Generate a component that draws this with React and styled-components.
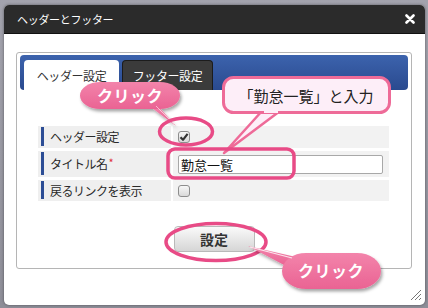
import React from "react";
import styled, { createGlobalStyle } from "styled-components";

const Global = createGlobalStyle`
  html, body { margin: 0; padding: 0; }
  body {
    background: #8f8f99;
    font-family: "Noto Sans CJK JP", "Noto Sans", sans-serif;
  }
  #root { width: 428px; height: 308px; }
`;

const Stage = styled.div`
  position: relative;
  width: 428px;
  height: 308px;
  overflow: hidden;
  padding: 5px 0 0 4px;
  box-sizing: border-box;
  background: linear-gradient(#a3a3ad, #8e8e98);
`;

const Dialog = styled.div`
  position: relative;
  width: 421px;
  height: 300px;
  background: #fff;
  border-radius: 5px;
  box-shadow: 0 0 3px rgba(0, 0, 0, 0.45);
  display: flex;
  flex-direction: column;
`;

const TitleBar = styled.div`
  height: 28px;
  flex: none;
  background: #2b2b2b;
  border-bottom: 1px solid #111;
  border-radius: 5px 5px 0 0;
  display: flex;
  align-items: center;
  justify-content: space-between;
  padding: 0 10px 0 13px;
`;

const Title = styled.span`
  color: #fff;
  font-size: 11px;
  letter-spacing: -0.3px;
`;

const Body = styled.div`
  padding: 18px 12px 0 12px;
`;

const Panel = styled.div`
  box-sizing: border-box;
  width: 396px;
  height: 217px;
  border: 1px solid #b5b5b5;
  border-radius: 3px;
  padding: 2px 3px 0 3px;
`;

const TabBar = styled.div`
  height: 35px;
  box-sizing: border-box;
  background: linear-gradient(#3c63ad, #2a4a8f);
  border-radius: 4px;
  display: flex;
  align-items: flex-end;
  gap: 3px;
  padding: 5px 0 0 4px;
`;

const Tab = styled.div`
  box-sizing: border-box;
  width: ${(p) => p.$w}px;
  height: 30px;
  border-radius: 4px 4px 0 0;
  display: flex;
  align-items: center;
  justify-content: center;
  font-size: 12px;
  letter-spacing: -0.4px;
  background: ${(p) => (p.$active ? "#fff" : "#3b3b3b")};
  color: ${(p) => (p.$active ? "#333" : "#fff")};
  border: ${(p) => (p.$active ? "none" : "1px solid #1c1c1c")};
  border-bottom: none;
`;

const Content = styled.div`
  padding: 36px 18px 0 18px;
`;

const FormGrid = styled.div`
  display: grid;
  width: 351px;
  grid-template-columns: 133px 216px;
  grid-template-rows: 22px 26px 21px;
  column-gap: 2px;
  row-gap: 3px;
`;

const Label = styled.div`
  background: #efefef;
  display: flex;
  padding: 1px 0 2px 3px;
`;

const LabelText = styled.div`
  display: flex;
  align-items: center;
  border-left: 3px solid #2c4d95;
  padding-left: 6px;
  font-size: 12px;
  letter-spacing: -0.5px;
  color: #2a2a2a;
`;

const Required = styled.span`
  color: #e0303a;
  margin-left: 1px;
  font-size: 11px;
  align-self: flex-start;
  margin-top: 2px;
`;

const Value = styled.div`
  background: #f2f2f2;
  display: flex;
  align-items: center;
  padding-left: 5px;
`;

const Check = styled.span`
  width: 12px;
  height: 12px;
  box-sizing: border-box;
  border: 1px solid #8d8d8d;
  border-radius: 3px;
  background: linear-gradient(#f7f7f7, #d9d9d9);
  display: flex;
  align-items: center;
  justify-content: center;
`;

const TextInput = styled.div`
  box-sizing: border-box;
  width: 205px;
  height: 19px;
  border: 1px solid #a8a8a8;
  border-radius: 2px;
  background: #fff;
  font-size: 13px;
  color: #111;
  display: flex;
  align-items: center;
  padding-left: 2px;
`;

const ButtonRow = styled.div`
  display: flex;
  justify-content: center;
  margin-top: 25px;
`;

const Button = styled.div`
  box-sizing: border-box;
  width: 81px;
  height: 26px;
  border: 1px solid #b9b9b9;
  border-radius: 4px;
  background: linear-gradient(#fafafa, #d6d6d6);
  display: flex;
  align-items: center;
  justify-content: center;
  font-size: 14px;
  font-weight: 700;
  color: #333;
`;

const Grip = styled.svg`
  position: absolute;
  right: 3px;
  bottom: 4px;
`;

const Overlay = styled.svg`
  position: absolute;
  left: 0;
  top: 0;
  pointer-events: none;
`;

const CalloutText = styled.span`
  position: absolute;
  left: ${(p) => p.$x}px;
  top: ${(p) => p.$y}px;
  transform: translate(-50%, -50%);
  white-space: nowrap;
  font-size: ${(p) => (p.$light ? 15 : 16)}px;
  font-weight: ${(p) => (p.$light ? 400 : 700)};
  color: ${(p) => (p.$light ? "#222" : "#fff")};
  letter-spacing: ${(p) => (p.$light ? "0" : "0.5px")};
`;

const PINK = "#ee6b98";
const RING = "#e84b86";

function CheckBox({ checked }) {
  return (
    <Check>
      {checked && (
        <svg width="10" height="10" viewBox="0 0 10 10">
          <path d="M1.5 5.2 L4 7.8 L8.6 1.8" fill="none" stroke="#333" strokeWidth="2.2" strokeLinejoin="round" />
        </svg>
      )}
    </Check>
  );
}

function Annotations() {
  return (
    <Overlay width="428" height="308" viewBox="0 0 428 308">
      <defs>
        <linearGradient id="pinkg" x1="0" y1="0" x2="0" y2="1">
          <stop offset="0" stopColor="#f384ab" />
          <stop offset="1" stopColor="#ea6393" />
        </linearGradient>
        <filter id="sh" x="-20%" y="-20%" width="150%" height="160%">
          <feDropShadow dx="1.5" dy="2.5" stdDeviation="1.5" floodColor="#000" floodOpacity="0.35" />
        </filter>
      </defs>

      {/* bubble 1 */}
      <g filter="url(#sh)">
        <path d="M148 105 L176 126 L158 106 Z" fill="url(#pinkg)" />
        <rect x="80" y="82" width="100" height="27" rx="20" ry="13.5" fill="url(#pinkg)" />
      </g>
      <path d="M156 106 L174 124" stroke="#fff" strokeWidth="0.8" opacity="0.7" />

      {/* ring around checkbox */}
      <ellipse cx="186" cy="131.5" rx="26.5" ry="13.5" fill="none" stroke={RING} strokeWidth="3.5" />

      {/* bubble 2 */}
      <path d="M262 111 L224 153 L280 111 Z" fill="#fdeef8" stroke={PINK} strokeWidth="2.5" strokeLinejoin="round" />
      <rect x="223.5" y="77.5" width="166" height="35" rx="10" fill="#fdeef8" stroke={PINK} strokeWidth="3" />
      <path d="M264 111.5 L278 111.5" stroke="#fdeef8" strokeWidth="3" />

      {/* rounded rect around input */}
      <rect x="168" y="149" width="126" height="29" rx="7" fill="none" stroke={RING} strokeWidth="3.5" />

      {/* ring around button */}
      <ellipse cx="216" cy="242" rx="50" ry="18.5" fill="none" stroke={RING} strokeWidth="3.5" />

      {/* bubble 3 */}
      <g filter="url(#sh)">
        <path d="M248 246 L296 257 L286 266 Z" fill="url(#pinkg)" />
        <rect x="282" y="253" width="99" height="36" rx="24" ry="18" fill="url(#pinkg)" />
      </g>
      <path d="M250 247 L292 258" stroke="#fff" strokeWidth="1.2" opacity="0.8" />
    </Overlay>
  );
}

export default function App() {
  return (
    <>
      <Global />
      <Stage>
        <Dialog>
          <TitleBar>
            <Title>ヘッダーとフッター</Title>
            <svg width="10" height="10" viewBox="0 0 10 10">
              <path d="M1.5 1.5 L8.5 8.5 M8.5 1.5 L1.5 8.5" stroke="#fff" strokeWidth="2.6" strokeLinecap="round" />
            </svg>
          </TitleBar>
          <Body>
            <Panel>
              <TabBar>
                <Tab $active $w={95}>ヘッダー設定</Tab>
                <Tab $w={91}>フッター設定</Tab>
              </TabBar>
              <Content>
                <FormGrid>
                  <Label><LabelText>ヘッダー設定</LabelText></Label>
                  <Value><CheckBox checked /></Value>
                  <Label><LabelText>タイトル名<Required>*</Required></LabelText></Label>
                  <Value><TextInput>勤怠一覧</TextInput></Value>
                  <Label><LabelText>戻るリンクを表示</LabelText></Label>
                  <Value><CheckBox /></Value>
                </FormGrid>
                <ButtonRow>
                  <Button>設定</Button>
                </ButtonRow>
              </Content>
            </Panel>
          </Body>
          <Grip width="13" height="13" viewBox="0 0 13 13">
            <path d="M12 2 L2 12 M12 6 L6 12 M12 10 L10 12" stroke="#777" strokeWidth="1" />
          </Grip>
        </Dialog>
        <Annotations />
        <CalloutText $x={130} $y={95}>クリック</CalloutText>
        <CalloutText $light $x={306} $y={95}>「勤怠一覧」と入力</CalloutText>
        <CalloutText $x={331} $y={270}>クリック</CalloutText>
      </Stage>
    </>
  );
}
